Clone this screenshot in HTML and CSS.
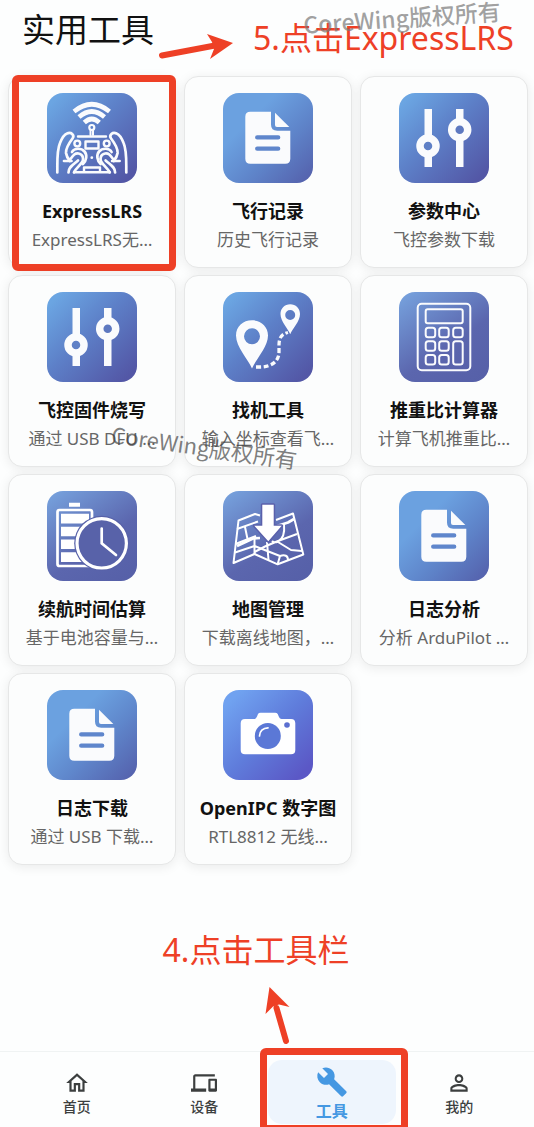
FILE: index.html
```html
<!DOCTYPE html>
<html lang="zh-CN">
<head>
    <meta charset="UTF-8">
    <meta name="viewport" content="width=device-width, initial-scale=1.0">
    <title>实用工具</title>
    <link rel="stylesheet" href="styles.css">
</head>
<body>

<!-- Shared icons -->
<svg class="defs" width="0" height="0" aria-hidden="true">
    <symbol id="icon-sliders" viewBox="0 0 90 90">
        <path fill="#fafbfd" d="M25.500 16H33V74H25.500zM57 16H64.500V74H57z"/>
        <circle cx="29" cy="53" r="8" fill="#5f80c6" stroke="#fafbfd" stroke-width="7.5"/>
        <circle cx="60.7" cy="36.7" r="8" fill="#5d78c0" stroke="#fafbfd" stroke-width="7.5"/>
    </symbol>
    <symbol id="icon-doc" viewBox="0 0 90 90">
        <path fill="#fafbfd" d="M27.300 18.700H48V31.500Q48 37.700 54.200 37.700H67.300V65.700Q67.300 70.700 62.300 70.700H27.300Q22.300 70.700 22.300 65.700V23.700Q22.300 18.700 27.300 18.700z"/>
        <path fill="#fafbfd" d="M52 19.700L66.300 34H54Q52 34 52 32z"/>
        <path stroke="#5f86cc" stroke-width="4.3" stroke-linecap="round" d="M34.200 44.400H55.200M34.200 55.700H55.200"/>
    </symbol>
</svg>

<header class="header">
    <h1>实用工具</h1>
    <svg class="arrow-right" width="76" height="28" viewBox="0 0 76 28" aria-hidden="true">
        <path d="M4 22.500L57 12.500" stroke="#ee4026" stroke-width="6" stroke-linecap="round"/>
        <path d="M49 1L75 10L52 26L56 16L54 9z" fill="#ee4026"/>
    </svg>
    <p class="hint">5.点击ExpressLRS</p>
    <span class="watermark watermark-top">CoreWing版权所有</span>
</header>

<main class="tools">
    <a class="card" href="#">
        <svg class="icon blue" viewBox="0 0 90 90" fill="none" stroke="#fafbfd" stroke-linecap="round" stroke-linejoin="round" aria-hidden="true">
            <path stroke-width="4.6" stroke-linecap="butt" d="M27 18.500Q44.800 4 62.500 18.500M32 24Q44.800 13 57.500 24M37.300 29.500Q44.800 22.500 52.300 29.500"/>
            <circle cx="44.8" cy="34.5" r="2.5" stroke-width="2.2"/>
            <path stroke-width="2" d="M43.500 37.500V42M46 37.500V42"/>
            <path stroke-width="2.4" d="M31 43.500H59M38.500 48.500H51.500V55.500H38.500zM27 79.300H63M37 79V74.500H53V79"/>
            <circle cx="30.3" cy="50.5" r="2.9" stroke-width="2.4"/>
            <circle cx="59.7" cy="50.5" r="2.9" stroke-width="2.4"/>
            <circle cx="44.8" cy="64.7" r="1.4" fill="#fafbfd" stroke="none"/>
            <g id="hand" stroke-width="2.7">
                <path d="M10.300 79.500C10.500 70 9.500 58 13 50C15 45 17 41.500 20 40.500C24 38.500 28 42 25.500 45.500C22.500 49.500 18.500 55 19 60Q19.500 64 23 68"/>
                <path d="M17 68H24.500"/>
                <path d="M25 59C27 55 34 54.500 37.500 58.500C40.500 62 39.500 68 36 71"/>
                <path d="M21.500 79.500C21.500 74 26 72 31 67.500M27 79.500C27.500 76.500 32 74 35.500 68.500C37 65 35.500 61 31.500 60.500C28 60 26.500 62 23.500 66"/>
            </g>
            <use href="#hand" transform="matrix(-1 0 0 1 89.6 0)"/>
        </svg>
        <h2>ExpressLRS</h2>
        <p>ExpressLRS无…</p>
        <span class="marker"></span>
    </a>

    <a class="card" href="#">
        <svg class="icon sky" aria-hidden="true"><use href="#icon-doc"/></svg>
        <h2>飞行记录</h2>
        <p>历史飞行记录</p>
    </a>

    <a class="card" href="#">
        <svg class="icon blue" aria-hidden="true"><use href="#icon-sliders"/></svg>
        <h2>参数中心</h2>
        <p>飞控参数下载</p>
    </a>

    <a class="card" href="#">
        <svg class="icon blue" aria-hidden="true"><use href="#icon-sliders"/></svg>
        <h2>飞控固件烧写</h2>
        <p>通过 USB DFU …</p>
    </a>

    <a class="card" href="#">
        <svg class="icon blue" viewBox="0 0 90 90" fill="none" aria-hidden="true">
            <path fill="#fafbfd" fill-rule="evenodd" d="M29 76.500C25 67 13 55 13 43.500C13 34.500 20 28.300 29 28.300S45 34.500 45 43.500C45 55 33 67 29 76.500zM29 36.300a8 8 0 1 0 0 16a8 8 0 1 0 0-16z"/>
            <path fill="#fafbfd" fill-rule="evenodd" d="M67.200 42.300C65 36.500 57.500 29.500 57.500 22C57.500 16.300 61.700 12.300 67.200 12.300S77 16.300 77 22C77 29.500 69.500 36.500 67.200 42.300zM67.200 18a5 5 0 1 0 0 10a5 5 0 1 0 0-10z"/>
            <path stroke="#fafbfd" stroke-width="3.3" stroke-dasharray="5 2.5" d="M33 75H37C49 75 56 69 56 60V53C56 46 58.500 42 65 40.500"/>
        </svg>
        <h2>找机工具</h2>
        <p>输入坐标查看飞…</p>
    </a>

    <a class="card" href="#">
        <svg class="icon indigo" viewBox="0 0 90 90" fill="none" stroke="#fafbfd" stroke-width="2" aria-hidden="true">
            <rect x="18.7" y="11.7" width="52.6" height="66.6" rx="4"/>
            <rect x="26.7" y="17.3" width="37" height="14" rx="2"/>
            <rect x="26.7" y="35.7" width="9.5" height="9.5" rx="2.5"/>
            <rect x="40.2" y="35.7" width="9.5" height="9.5" rx="2.5"/>
            <rect x="54.2" y="35.7" width="9.5" height="9.5" rx="2.5"/>
            <rect x="26.7" y="49.3" width="9.5" height="9.5" rx="2.5"/>
            <rect x="40.2" y="49.3" width="9.5" height="9.5" rx="2.5"/>
            <rect x="26.7" y="63" width="9.5" height="9.5" rx="2.5"/>
            <rect x="40.2" y="63" width="9.5" height="9.5" rx="2.5"/>
            <rect x="54.2" y="49.3" width="9.5" height="23.2" rx="2.5"/>
        </svg>
        <h2>推重比计算器</h2>
        <p>计算飞机推重比…</p>
    </a>

    <a class="card" href="#">
        <svg class="icon indigo" viewBox="0 0 90 90" fill="none" aria-hidden="true">
            <rect x="10.5" y="19" width="34.5" height="56" rx="2" stroke="#fff" stroke-width="2.7"/>
            <path fill="#fff" d="M22 11.700h11v4h-11zM14 22.700h28v9.800h-28zM14 35.700h28v9.600h-28zM14 48.500h28v9.600h-28zM14 61.200h28v9.800h-28z"/>
            <circle cx="54.7" cy="52.3" r="27.5" fill="#5862a9"/>
            <circle cx="54.7" cy="52.3" r="24.7" stroke="#fff" stroke-width="3.2"/>
            <path stroke="#fff" stroke-width="2.7" stroke-linecap="round" d="M54.700 37.500V52.300L69 64"/>
        </svg>
        <h2>续航时间估算</h2>
        <p>基于电池容量与…</p>
    </a>

    <a class="card" href="#">
        <svg class="icon indigo" viewBox="0 0 90 90" fill="none" stroke="#fff" stroke-width="2" stroke-linejoin="round" aria-hidden="true">
            <path d="M37 24.500L32 23L15.500 29.500L10.500 72L31.500 63L54.700 73.300L80.300 63.500L70 22.500L53 29"/>
            <path d="M14 38L35 30.500M12.500 53L33 45M12 61.500L31.500 55L57 65M31.500 46V63M22 36L24.500 48M44 51L45.500 69"/>
            <path stroke-width="2.7" d="M14 55L30 47.500L37 47M54 35L65 31.500L71 28"/>
            <path d="M31.500 61L42 55.500L55 50L74 43M61 33C62 43 60 48 55 50.500C52 52 50 51 49 50M55 51L68 59L79 60M57 65L54.700 73M57 65C62 63 65 65 65 69"/>
            <path class="map-arrow" stroke="#5a60ab" stroke-width="3" fill="#fff" d="M39.300 13.700H50.700V34.700H58.700L45.300 50.300L31.300 34.700H39.300z"/>
        </svg>
        <h2>地图管理</h2>
        <p>下载离线地图，…</p>
    </a>

    <a class="card" href="#">
        <svg class="icon sky" aria-hidden="true"><use href="#icon-doc"/></svg>
        <h2>日志分析</h2>
        <p>分析 ArduPilot …</p>
    </a>

    <a class="card" href="#">
        <svg class="icon sky" aria-hidden="true"><use href="#icon-doc"/></svg>
        <h2>日志下载</h2>
        <p>通过 USB 下载…</p>
    </a>

    <a class="card" href="#">
        <svg class="icon violet" viewBox="0 0 90 90" fill="none" aria-hidden="true">
            <path fill="#fff" d="M22 29H31Q33 29 34 26.500L35 24Q35.700 22.700 37.500 22.700H52Q54 22.700 54.700 24L56 27Q56.800 29 58.500 29H68Q72.300 29 72.300 33.300V60Q72.300 64.300 68 64.300H22Q17.700 64.300 17.700 60V33.300Q17.700 29 22 29z"/>
            <circle cx="44.8" cy="46" r="13" fill="#5b78d6"/>
            <path stroke="#fff" stroke-width="1.7" stroke-linecap="round" d="M36.500 46C36.500 41.500 40 37.800 45 37.800"/>
            <circle cx="64" cy="35" r="2.8" fill="#5b6fd0"/>
        </svg>
        <h2>OpenIPC 数字图</h2>
        <p>RTL8812 无线…</p>
    </a>

    <span class="watermark watermark-middle">CoreWing版权所有</span>
</main>

<div class="footer-hint">
    <p class="hint">4.点击工具栏</p>
    <svg class="arrow-up" width="28" height="60" viewBox="0 0 28 60" aria-hidden="true">
        <path d="M22 55L12.500 22" stroke="#ee4026" stroke-width="6" stroke-linecap="round"/>
        <path d="M5.500 1L25.500 21L15 18.500L9 20.500L1.500 28z" fill="#ee4026"/>
    </svg>
</div>

<nav class="tabbar">
    <a class="tab" href="#">
        <svg viewBox="0 0 24 24" aria-hidden="true"><path d="M12 5.690l5 4.500V18h-2v-6H9v6H7v-7.810l5-4.500M12 3L2 12h3v8h6v-6h2v6h6v-8h3L12 3z"/></svg>
        <span>首页</span>
    </a>
    <a class="tab" href="#">
        <svg viewBox="0 0 24 24" aria-hidden="true"><path d="M4 6h18V4H4c-1.100 0-2 .9-2 2v11H0v3h14v-3H4V6zm19 2h-6c-.55 0-1 .45-1 1v10c0 .55.45 1 1 1h6c.55 0 1-.45 1-1V9c0-.55-.45-1-1-1zm-1 9h-4v-7h4v7z"/></svg>
        <span>设备</span>
    </a>
    <a class="tab active" href="#">
        <svg viewBox="0 0 24 24" aria-hidden="true"><path d="M22.700 19l-9.100-9.100c.9-2.300.4-5-1.500-6.900-2-2-5-2.400-7.400-1.300L9 6 6 9 1.600 4.700C.4 7.100.9 10.100 2.900 12.100c1.900 1.900 4.600 2.400 6.900 1.500l9.100 9.100c.4.4 1 .4 1.400 0l2.300-2.300c.5-.4.5-1.100.1-1.400z"/></svg>
        <span>工具</span>
        <span class="marker"></span>
    </a>
    <a class="tab" href="#">
        <svg viewBox="0 0 24 24" aria-hidden="true"><path d="M12 5.900c1.160 0 2.100.94 2.100 2.100s-.94 2.100-2.100 2.100S9.900 9.160 9.900 8s.94-2.100 2.100-2.100m0 9c2.970 0 6.100 1.460 6.100 2.100v1.100H5.900V17c0-.64 3.130-2.100 6.100-2.100M12 4C9.790 4 8 5.790 8 8s1.790 4 4 4 4-1.790 4-4-1.790-4-4-4zm0 9c-2.670 0-8 1.340-8 4v3h16v-3c0-2.660-5.330-4-8-4z"/></svg>
        <span>我的</span>
    </a>
</nav>

</body>
</html>
```

FILE: styles.css
```css
* {
    box-sizing: border-box;
}
body {
    font-family: "Noto Sans", "Noto Sans CJK SC", sans-serif;
    margin: 0;
    min-height: 100vh;
    display: flex;
    flex-direction: column;
    background-color: #fdfefe;
    color: #111;
}
h1, h2, p {
    margin: 0;
}
a {
    color: inherit;
    text-decoration: none;
}
.defs {
    position: absolute;
}

/* Header */
.header {
    position: relative;
    display: flex;
    align-items: flex-start;
    height: 76px;
    padding: 6px 0 0 22px;
    white-space: nowrap;
}
h1 {
    font-size: 33px;
    line-height: 48px;
    font-weight: 400;
}
.hint {
    font-size: 32px;
    line-height: 48px;
    color: #ee4026;
}
.arrow-right {
    flex: none;
    margin: 27px 19px 0 4px;
}
.header .hint {
    padding-top: 8px;
}
.watermark {
    position: absolute;
    font-family: "Noto Sans CJK SC", sans-serif;
    line-height: 20px;
    white-space: nowrap;
}
.watermark-top {
    top: 7px;
    right: 33px;
    font-size: 23px;
    font-weight: 500;
    color: rgba(120, 120, 120, 0.7);
    transform: rotate(-4deg);
}
.watermark-middle {
    top: 360px;
    left: 111px;
    font-size: 22px;
    color: rgba(70, 70, 70, 0.7);
    transform: rotate(8deg);
}

/* Tool cards */
.tools {
    position: relative;
    display: grid;
    grid-template-columns: repeat(3, 1fr);
    gap: 7px 8px;
    padding: 0 6px 0 8px;
}
.card {
    position: relative;
    display: flex;
    flex-direction: column;
    align-items: center;
    padding: 16px 8px 12px;
    border: 1px solid #e6e7e7;
    border-radius: 14px;
    background-color: #fcfdfd;
    box-shadow: 0 2px 12px rgba(0, 0, 0, 0.08);
    text-align: center;
    white-space: nowrap;
}
.icon {
    width: 90px;
    height: 90px;
    margin-bottom: 14px;
    border-radius: 16px;
}
.blue {
    background: linear-gradient(135deg, #6ba5e2 8%, #5d80c8 45%, #5357a6 92%);
}
.sky {
    background: linear-gradient(135deg, #6ba1e0 30%, #5f86cb 60%, #5563ae 95%);
}
.indigo {
    background: linear-gradient(145deg, #759fdb 5%, #5b66ae 58%, #5660a8 95%);
}
.violet {
    background: linear-gradient(135deg, #70a2f0 10%, #5f7cdb 50%, #5b58c6 90%);
}
.map-arrow {
    paint-order: stroke;
}
.card h2 {
    font-size: 18px;
    line-height: 28px;
    font-weight: 700;
}
.card p {
    font-size: 17px;
    line-height: 30px;
    color: #666;
}

/* Red marker frames */
.marker {
    position: absolute;
    border: 7px solid #ee4026;
    border-radius: 6px;
}
.card .marker {
    inset: -2px -1px -4px 3px;
}

/* Lower hint */
.footer-hint {
    display: flex;
    flex-direction: column;
    align-items: center;
    margin-top: auto;
    padding: 24px 22px 5px 0;
}
.arrow-up {
    margin: 12px 0 0 44px;
}

/* Bottom tabs */
.tabbar {
    display: flex;
    padding: 8px 11px 3px 13px;
    border-top: 1px solid #f0f3f3;
}
.tab {
    position: relative;
    flex: 1;
    display: flex;
    flex-direction: column;
    align-items: center;
    height: 64px;
    padding-top: 10px;
    border-radius: 14px;
    font-size: 14px;
    line-height: 22px;
    font-weight: 500;
    color: #3c3f3f;
}
.tab svg {
    width: 26px;
    height: 26px;
    fill: currentColor;
}
.tab.active {
    padding-top: 6px;
    background-color: #eef5fd;
    color: #4598e2;
    font-size: 16px;
    line-height: 26px;
    font-weight: 700;
}
.tab.active svg {
    width: 32px;
    height: 32px;
}
.tab .marker {
    inset: -12px -12px -3px -8px;
    border-bottom-width: 2px;
    border-radius: 6px 6px 0 0;
}
```
